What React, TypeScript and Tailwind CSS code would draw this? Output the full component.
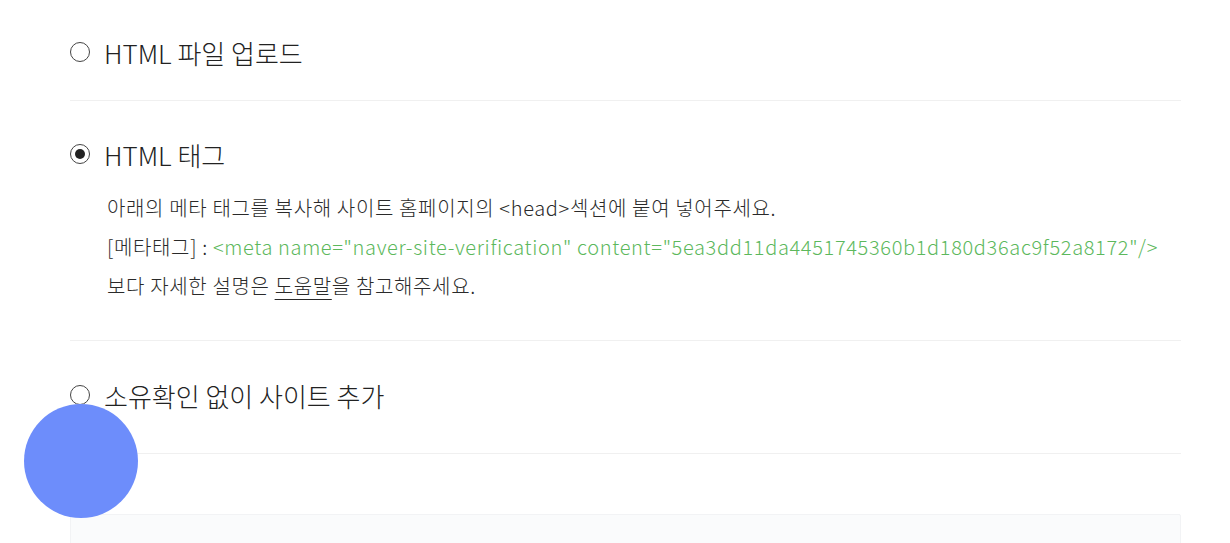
import React, { useState } from "react";

const FONT = { fontFamily: '"Noto Sans CJK KR", "Noto Sans", sans-serif' };

type Option = "file" | "tag" | "none";

function Radio({ checked }: { checked: boolean }) {
  return (
    <span className="flex h-[20px] w-[20px] shrink-0 items-center justify-center rounded-full border border-[#444] bg-white">
      {checked && <span className="h-[10px] w-[10px] rounded-full bg-[#222]" />}
    </span>
  );
}

export default function App() {
  const [selected, setSelected] = useState<Option>("tag");

  return (
    <div className="relative h-[543px] w-[1230px] overflow-hidden bg-white" style={FONT}>
      <div className="mx-[70px] w-[1111px]">
        {/* HTML 파일 업로드 */}
        <div className="border-b border-[#f0f0f0] pt-[34px] pb-[30px]">
          <button
            onClick={() => setSelected("file")}
            className="flex h-[36px] items-center gap-[14px] text-[26px] font-light text-[#222]"
          >
            <Radio checked={selected === "file"} />
            HTML 파일 업로드
          </button>
        </div>

        {/* HTML 태그 */}
        <div className="border-b border-[#f0f0f0] pt-[35px] pb-[35px]">
          <button
            onClick={() => setSelected("tag")}
            className="flex h-[36px] items-center gap-[14px] text-[26px] font-light text-[#222]"
          >
            <Radio checked={selected === "tag"} />
            HTML 태그
          </button>
          <div className="mt-[16px] pl-[37px] text-[20px] leading-[39px] tracking-[0.65px] font-light text-[#2a2a2a]">
            <p>아래의 메타 태그를 복사해 사이트 홈페이지의 &lt;head&gt;섹션에 붙여 넣어주세요.</p>
            <p>
              [메타태그] :{" "}
              <span className="text-[#5cb85c]">
                &lt;meta name="naver-site-verification" content="5ea3dd11da4451745360b1d180d36ac9f52a8172"/&gt;
              </span>
            </p>
            <p>
              보다 자세한 설명은{" "}
              <span className="underline decoration-1 underline-offset-[5px]">도움말</span>을 참고해주세요.
            </p>
          </div>
        </div>

        {/* 소유확인 없이 사이트 추가 */}
        <div className="border-b border-[#f0f0f0] pt-[36px] pb-[40px]">
          <button
            onClick={() => setSelected("none")}
            className="flex h-[36px] items-center gap-[14px] text-[26px] font-light text-[#222]"
          >
            <Radio checked={selected === "none"} />
            소유확인 없이 사이트 추가
          </button>
        </div>

        <div className="mt-[60px] h-[60px] rounded-t-[2px] border border-[#f2f3f5] bg-[#fafbfc]" />
      </div>

      {/* touch indicator */}
      <div className="absolute left-[24px] top-[404px] h-[114px] w-[114px] rounded-full bg-[#6d8dfb]" />
    </div>
  );
}
